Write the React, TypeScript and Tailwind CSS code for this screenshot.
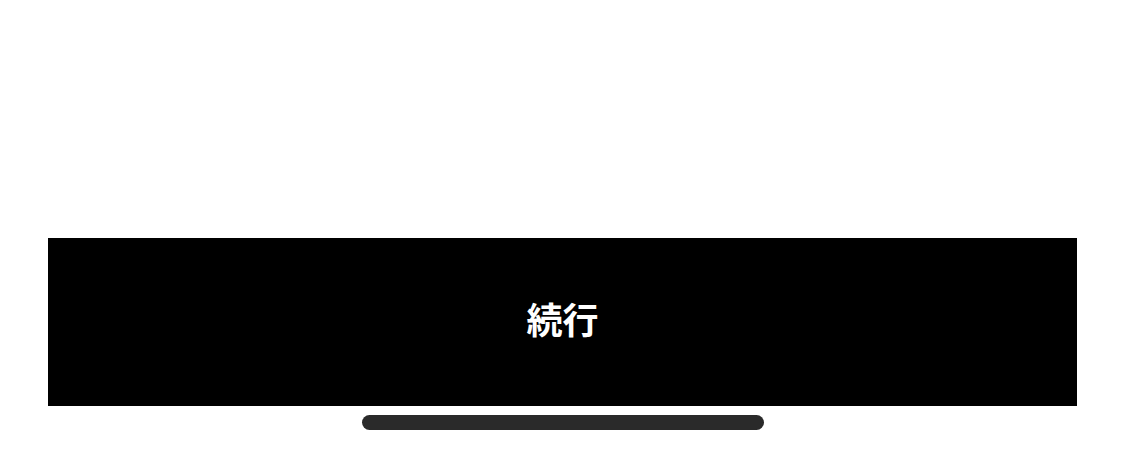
export default function App() {
  return (
    <div className="flex h-[453px] w-[1124px] flex-col bg-white pt-[238px] pl-[48px] pr-[47px]">
      <button className="flex h-[168px] w-full items-center justify-center bg-black pb-[8px] text-[36px] font-semibold text-white [font-family:'Noto_Sans_CJK_JP','Noto_Sans',sans-serif]">
        続行
      </button>
      <div className="mt-[9px] ml-[314px] h-[15px] w-[402px] rounded-full bg-[#2a2a2a]" />
    </div>
  );
}
